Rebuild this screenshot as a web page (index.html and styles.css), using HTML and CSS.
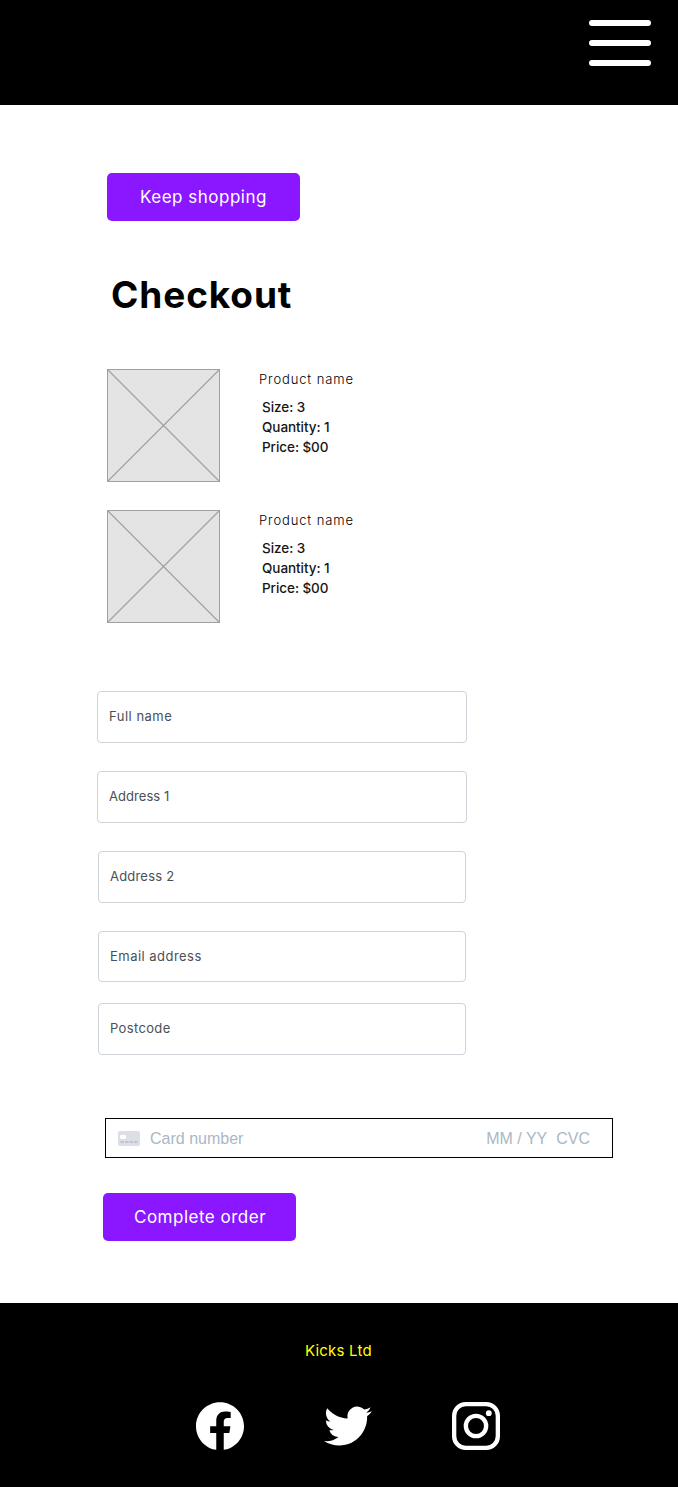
FILE: index.html
```html
<!DOCTYPE html>
<html lang="en">
<head>
<meta charset="utf-8">
<title>Checkout</title>
<link rel="stylesheet" href="styles.css">
</head>
<body>
<header class="topbar">
  <div class="menu"><span class="bar"></span><span class="bar"></span><span class="bar"></span></div>
</header>
<main class="page">
  <div class="btn keep"><span class="keep-text">Keep shopping</span></div>
  <h1 class="title">Checkout</h1>
  <section class="products">
    <article class="product">
      <svg class="thumb" width="113" height="113" viewBox="0 0 113 113"><rect x=".5" y=".5" width="112" height="112" fill="#e4e4e4" stroke="#a0a0a0"/><path d="M.5.5l112 112M112.5.5l-112 112" stroke="#a0a0a0" stroke-width="1.200"/></svg>
      <div class="info">
        <h2 class="name">Product name</h2>
        <div class="spec">Size: 3</div><div class="spec">Quantity: 1</div><div class="spec">Price: $00</div>
      </div>
    </article>
    <article class="product">
      <svg class="thumb" width="113" height="113" viewBox="0 0 113 113"><rect x=".5" y=".5" width="112" height="112" fill="#e4e4e4" stroke="#a0a0a0"/><path d="M.5.5l112 112M112.5.5l-112 112" stroke="#a0a0a0" stroke-width="1.200"/></svg>
      <div class="info">
        <h2 class="name">Product name</h2>
        <div class="spec">Size: 3</div><div class="spec">Quantity: 1</div><div class="spec">Price: $00</div>
      </div>
    </article>
  </section>
  <section class="fields">
    <div class="field wide"><span class="f-name">Full name</span></div>
    <div class="field wide"><span class="f-addr1">Address 1</span></div>
    <div class="field"><span class="f-addr2">Address 2</span></div>
    <div class="field email"><span class="f-email">Email address</span></div>
    <div class="field postcode"><span class="f-post">Postcode</span></div>
  </section>
  <div class="card">
    <svg class="card-icon" width="22" height="15" viewBox="0 0 22 15"><rect width="22" height="15" rx="2" fill="#dcdfe6"/><rect x="2" y="4" width="6" height="4" rx="1.3" fill="#fff"/><path d="M2.500 11h3.500M7 11h3.500M11.500 11H15M16 11h3.500" stroke="#b5bcc9" stroke-width="1.500"/></svg>
    <span class="card-number">Card number</span>
    <span class="expiry">MM / YY</span>
    <span class="cvc">CVC</span>
  </div>
  <div class="btn complete"><span class="complete-text">Complete order</span></div>
</main>
<footer class="footer">
  <div class="brand">Kicks Ltd</div>
  <div class="social">
    <svg width="48" height="48" viewBox="0 0 24 24" fill="#fff"><path d="M24 12.073c0-6.627-5.373-12-12-12s-12 5.373-12 12c0 5.99 4.388 10.954 10.125 11.854v-8.385H7.078v-3.47h3.047V9.43c0-3.007 1.792-4.669 4.533-4.669 1.312 0 2.686.235 2.686.235v2.953H15.83c-1.491 0-1.956.925-1.956 1.874v2.25h3.328l-.532 3.47h-2.796v8.385C19.612 23.027 24 18.062 24 12.073z"/></svg>
    <svg width="48" height="48" viewBox="0 0 24 24" fill="#fff"><path d="M23.953 4.57a10 10 0 01-2.825.775 4.958 4.958 0 002.163-2.723c-.951.555-2.005.959-3.127 1.184a4.92 4.92 0 00-8.384 4.482C7.69 8.095 4.067 6.13 1.64 3.162a4.822 4.822 0 00-.666 2.475c0 1.71.87 3.213 2.188 4.096a4.904 4.904 0 01-2.228-.616v.06a4.923 4.923 0 003.946 4.827 4.996 4.996 0 01-2.212.085 4.936 4.936 0 004.604 3.417 9.867 9.867 0 01-6.102 2.105c-.39 0-.779-.023-1.17-.067a13.995 13.995 0 007.557 2.209c9.053 0 13.998-7.496 13.998-13.985 0-.21 0-.42-.015-.63A9.935 9.935 0 0024 4.59z"/></svg>
    <svg width="48" height="48" viewBox="0 0 24 24" fill="none" stroke="#fff" stroke-width="2.160"><rect x="1.080" y="1.080" width="21.840" height="21.840" rx="5.800"/><circle cx="12" cy="12" r="5.080"/><circle cx="18.400" cy="5.600" r="1.440" fill="#fff" stroke="none"/></svg>
  </div>
</footer>
</body>
</html>
```
FILE: styles.css
```css
* { box-sizing: border-box; }
body { margin: 0; background: #fff; color: #000; font-family: Inter, sans-serif; }
svg { display: block; flex: none; }
span, h1, h2, .spec, .brand { white-space: nowrap; }
.topbar { height: 105px; background: #000; display: flex; justify-content: flex-end; padding: 20px 27px 0 0; }
.menu { width: 62px; display: flex; flex-direction: column; gap: 14px; }
.bar { height: 6px; border-radius: 3px; background: #fff; }
.page { height: 1198px; padding-top: 68px; }
.btn { width: 193px; height: 48px; border-radius: 5px; background: #8a17ff; color: #fff; font-size: 17px; line-height: 49px; }
.keep { margin-left: 107px; padding-left: 33px; }
.complete { margin: 35px 0 0 103px; padding-left: 31px; }
.keep-text { letter-spacing: 0.5px; }
.complete-text { letter-spacing: 0.5px; }
.title { margin: 50px 0 0 111px; font-size: 37px; line-height: 48px; font-weight: 700; letter-spacing: 0.9px; }
.products { margin: 50px 0 0 107px; display: flex; flex-direction: column; gap: 28px; }
.product { display: flex; gap: 39px; height: 113px; }
.name { margin: 0 0 7px; font-size: 13px; font-weight: 300; line-height: 21px; letter-spacing: 0.88px; }
.spec { margin-left: 3px; font-size: 13.500px; line-height: 20px; font-weight: 500; letter-spacing: -0.060px; color: #161616; }
.fields { margin: 68px 0 0 98px; }
.field { width: 368px; height: 52px; margin-bottom: 28px; padding-left: 11px; border: 1px solid #ced4da; border-radius: 4px; font-size: 13px; line-height: 48px; color: #495057; }
.f-name { letter-spacing: 0.5px; }
.f-addr1 { letter-spacing: 0.05px; }
.f-addr2 { letter-spacing: 0.2px; }
.f-email { letter-spacing: 0.47px; }
.f-post { letter-spacing: 0.35px; }
.wide { width: 370px; margin-left: -1px; }
.email { height: 51px; margin-bottom: 21px; }
.postcode { margin-bottom: 0; }
.card { margin: 63px 0 0 105px; width: 508px; height: 40px; border: 1px solid #000; padding-left: 12px; display: flex; align-items: center; font: 16px/18px "Liberation Sans", sans-serif; color: #aab7c4; }
.card span { padding-top: 2px; }
.card-number { margin-left: 10px; }
.expiry { margin-left: auto; }
.cvc { margin: 0 22px 0 9px; }
.footer { height: 184px; background: #000; padding-top: 36px; }
.brand { margin-left: 305px; color: #ff0; font-size: 15px; line-height: 24px; letter-spacing: 0.2px; }
.social { display: flex; gap: 80px; margin: 39px 0 0 196px; }
```
